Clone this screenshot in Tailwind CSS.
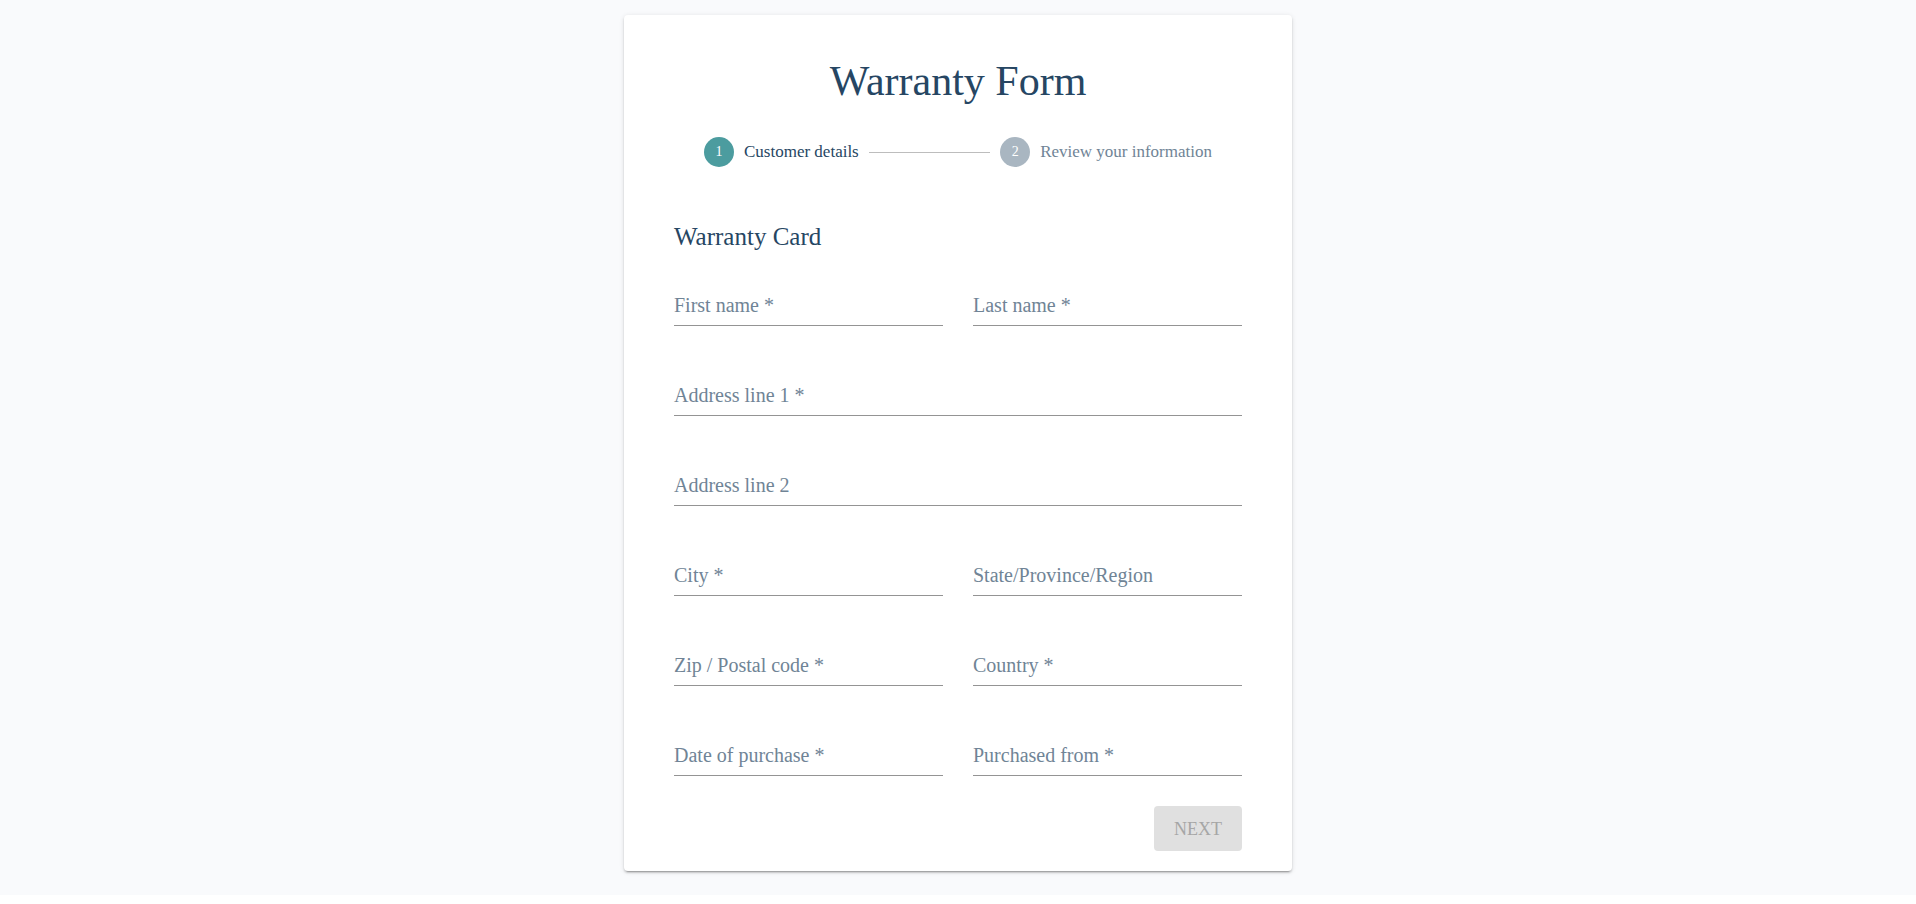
<!DOCTYPE html>
<html lang="en">
<head>
<meta charset="utf-8">
<meta name="viewport" content="width=device-width, initial-scale=1">
<title>Warranty Form</title>
<script src="https://cdn.jsdelivr.net/npm/@tailwindcss/browser@4"></script>
</head>
<body class="bg-white font-['Liberation_Serif',serif] text-[#264663]">
<main class="bg-[#f9fafc] px-4 pt-[15px] pb-6">
  <div class="mx-auto max-w-[668px] rounded bg-white px-[50px] pt-9 pb-5 shadow-[0_3px_1px_-2px_rgba(0,0,0,0.2),0_2px_2px_0_rgba(0,0,0,0.14),0_1px_5px_0_rgba(0,0,0,0.12)]">
    <h1 class="text-center text-[42px] leading-[60px]">Warranty Form</h1>

    <ol class="mt-[26px] flex items-center gap-[10px] px-[30px] text-[17px] leading-[30px]">
      <li class="flex items-center gap-[10px] whitespace-nowrap" aria-current="step">
        <span class="flex size-[30px] items-center justify-center rounded-full bg-[#4c9c9f] text-sm text-white">1</span>
        <span>Customer details</span>
      </li>
      <li class="h-px flex-1 bg-[#bdbdbd]" role="presentation"></li>
      <li class="flex items-center gap-[10px] whitespace-nowrap text-[#708496]">
        <span class="flex size-[30px] items-center justify-center rounded-full bg-[#a9b6c1] text-sm text-white">2</span>
        <span>Review your information</span>
      </li>
    </ol>

    <form>
      <h2 class="mt-[55px] text-[25px] leading-[30px]">Warranty Card</h2>
      <div class="mt-[30px] grid grid-cols-2 gap-x-[30px] gap-y-[46px] text-xl leading-6 text-[#708496]">
        <div class="grid border-b border-[#949494]">
          <input id="first" required placeholder=" " class="peer h-[43px] min-w-0 outline-none [grid-area:1/1]">
          <label for="first" class="pointer-events-none self-center pt-[3px] [grid-area:1/1] peer-focus:invisible peer-[:not(:placeholder-shown)]:invisible">First name *</label>
        </div>
        <div class="grid border-b border-[#949494]">
          <input id="last" required placeholder=" " class="peer h-[43px] min-w-0 outline-none [grid-area:1/1]">
          <label for="last" class="pointer-events-none self-center pt-[3px] [grid-area:1/1] peer-focus:invisible peer-[:not(:placeholder-shown)]:invisible">Last name *</label>
        </div>
        <div class="col-span-2 grid border-b border-[#949494]">
          <input id="addr1" required placeholder=" " class="peer h-[43px] min-w-0 outline-none [grid-area:1/1]">
          <label for="addr1" class="pointer-events-none self-center pt-[3px] [grid-area:1/1] peer-focus:invisible peer-[:not(:placeholder-shown)]:invisible">Address line 1 *</label>
        </div>
        <div class="col-span-2 grid border-b border-[#949494]">
          <input id="addr2" placeholder=" " class="peer h-[43px] min-w-0 outline-none [grid-area:1/1]">
          <label for="addr2" class="pointer-events-none self-center pt-[3px] [grid-area:1/1] peer-focus:invisible peer-[:not(:placeholder-shown)]:invisible">Address line 2</label>
        </div>
        <div class="grid border-b border-[#949494]">
          <input id="city" required placeholder=" " class="peer h-[43px] min-w-0 outline-none [grid-area:1/1]">
          <label for="city" class="pointer-events-none self-center pt-[3px] [grid-area:1/1] peer-focus:invisible peer-[:not(:placeholder-shown)]:invisible">City *</label>
        </div>
        <div class="grid border-b border-[#949494]">
          <input id="state" placeholder=" " class="peer h-[43px] min-w-0 outline-none [grid-area:1/1]">
          <label for="state" class="pointer-events-none self-center pt-[3px] [grid-area:1/1] peer-focus:invisible peer-[:not(:placeholder-shown)]:invisible">State/Province/Region</label>
        </div>
        <div class="grid border-b border-[#949494]">
          <input id="zip" required placeholder=" " class="peer h-[43px] min-w-0 outline-none [grid-area:1/1]">
          <label for="zip" class="pointer-events-none self-center pt-[3px] [grid-area:1/1] peer-focus:invisible peer-[:not(:placeholder-shown)]:invisible">Zip / Postal code *</label>
        </div>
        <div class="grid border-b border-[#949494]">
          <input id="country" required placeholder=" " class="peer h-[43px] min-w-0 outline-none [grid-area:1/1]">
          <label for="country" class="pointer-events-none self-center pt-[3px] [grid-area:1/1] peer-focus:invisible peer-[:not(:placeholder-shown)]:invisible">Country *</label>
        </div>
        <div class="grid border-b border-[#949494]">
          <input id="date" required placeholder=" " class="peer h-[43px] min-w-0 outline-none [grid-area:1/1]">
          <label for="date" class="pointer-events-none self-center pt-[3px] [grid-area:1/1] peer-focus:invisible peer-[:not(:placeholder-shown)]:invisible">Date of purchase *</label>
        </div>
        <div class="grid border-b border-[#949494]">
          <input id="from" required placeholder=" " class="peer h-[43px] min-w-0 outline-none [grid-area:1/1]">
          <label for="from" class="pointer-events-none self-center pt-[3px] [grid-area:1/1] peer-focus:invisible peer-[:not(:placeholder-shown)]:invisible">Purchased from *</label>
        </div>
      </div>
      <div class="mt-[30px] flex justify-end">
        <button type="submit" disabled class="h-[45px] rounded bg-[#e0e0e0] px-5 text-lg leading-6 text-[#a6a6a6]">NEXT</button>
      </div>
    </form>
  </div>
</main>
</body>
</html>
